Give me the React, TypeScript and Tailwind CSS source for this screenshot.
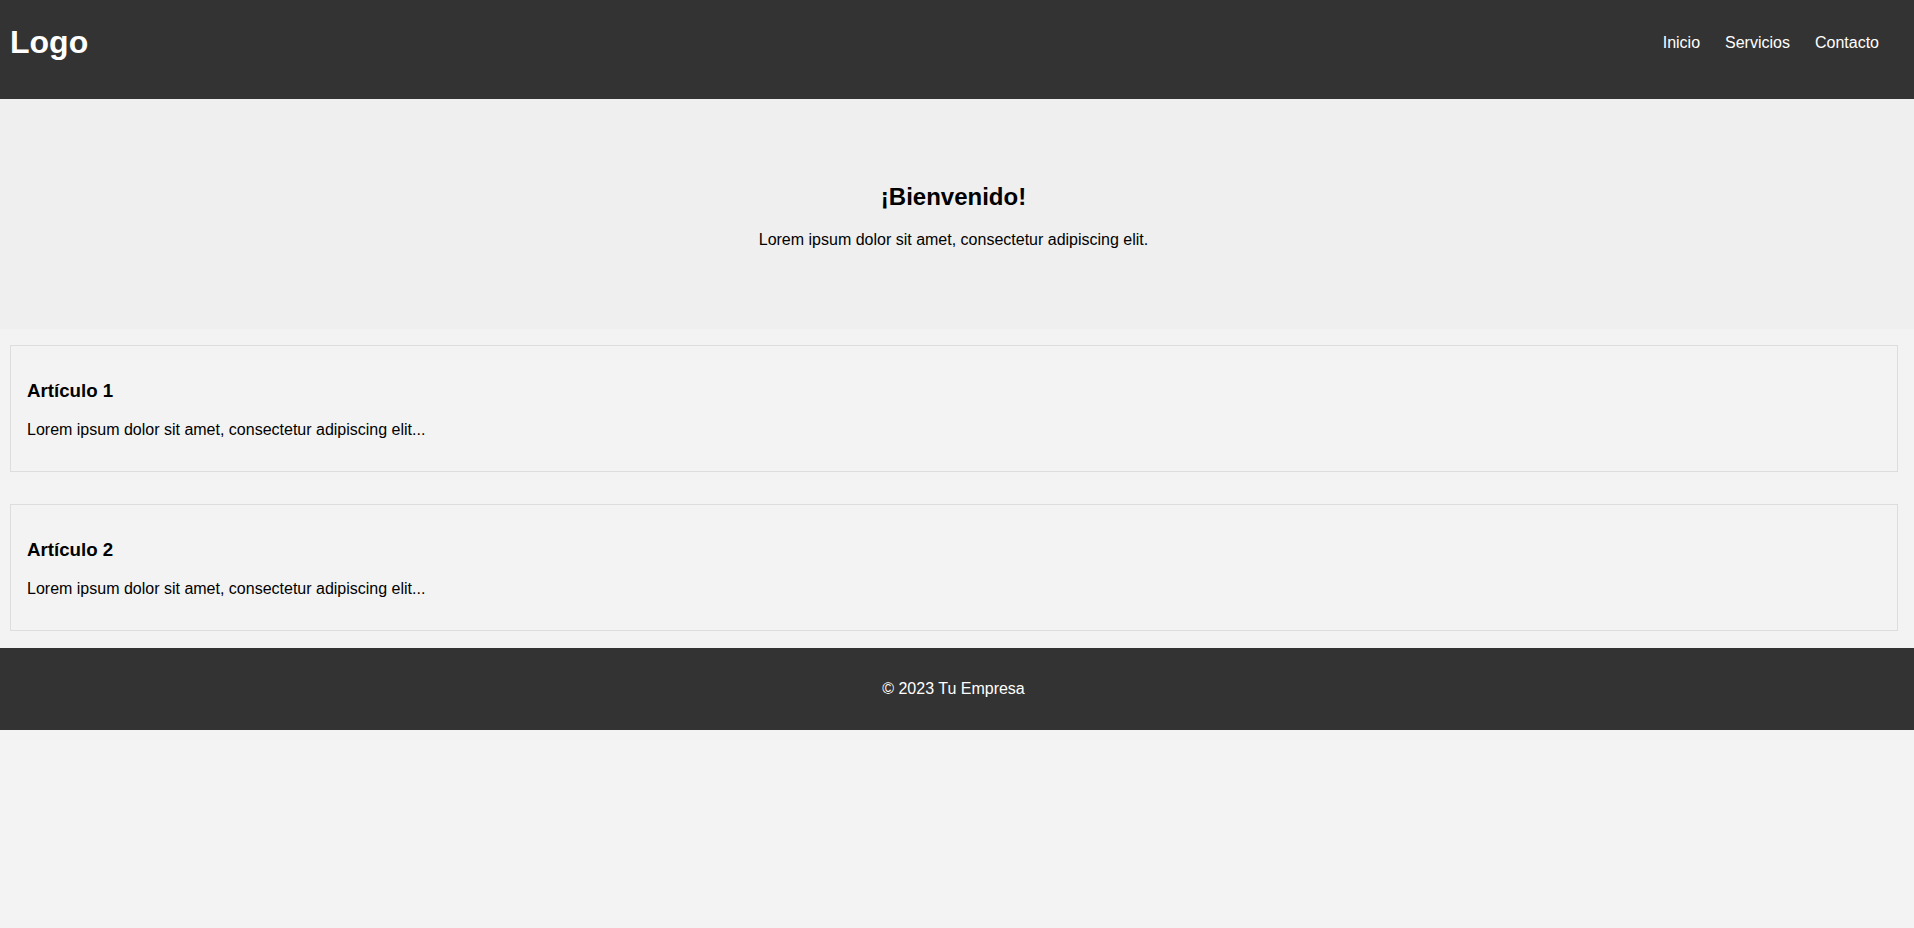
export default function App() {
  const articles = [
    { id: 1, title: 'Artículo 1' },
    { id: 2, title: 'Artículo 2' },
  ];

  return (
    <div className="min-h-screen bg-[#f3f3f3] font-['Liberation_Sans',Arial,sans-serif] text-black">
      {/* Header */}
      <header className="h-[99px] bg-[#333333] text-white pl-[10px] pr-[35px]">
        <div className="h-[85px] flex items-center justify-between">
          <h1 className="text-[32px] font-bold leading-[normal]">Logo</h1>
          <nav>
            <ul className="flex gap-[25px] text-[16px] leading-[normal]">
              <li><a href="#">Inicio</a></li>
              <li><a href="#">Servicios</a></li>
              <li><a href="#">Contacto</a></li>
            </ul>
          </nav>
        </div>
      </header>

      {/* Hero */}
      <section className="h-[230px] bg-[#efefef] pt-[84px] text-center">
        <div className="mr-[7px]">
          <h2 className="text-[24px] font-bold leading-[normal]">¡Bienvenido!</h2>
          <p className="mt-[20px] text-[16px] leading-[normal]">
            Lorem ipsum dolor sit amet, consectetur adipiscing elit.
          </p>
        </div>
      </section>

      {/* Articles */}
      <main className="flex flex-col gap-[32px] pt-[16px] pb-[17px] pl-[10px] pr-[16px]">
        {articles.map((article) => (
          <article key={article.id} className="border border-[#dddddd] px-[16px] pt-[34px] pb-[32px]">
            <h3 className="text-[18.72px] font-bold leading-[normal]">{article.title}</h3>
            <p className="mt-[19px] text-[16px] leading-[normal]">
              Lorem ipsum dolor sit amet, consectetur adipiscing elit...
            </p>
          </article>
        ))}
      </main>

      {/* Footer */}
      <footer className="bg-[#333333] text-white text-center py-[32px]">
        <p className="mr-[7px] text-[16px] leading-[normal]">© 2023 Tu Empresa</p>
      </footer>
    </div>
  );
}
